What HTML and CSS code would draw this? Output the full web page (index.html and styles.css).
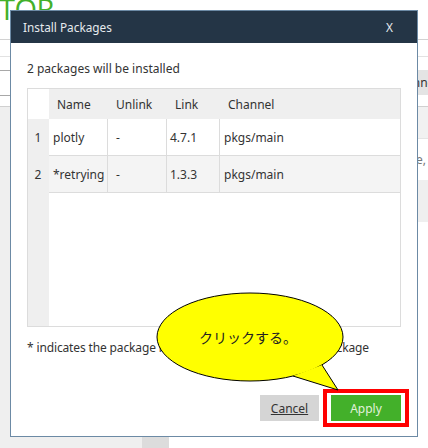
FILE: index.html
```html
<!DOCTYPE html>
<html lang="ja">
<head>
<meta charset="utf-8">
<title>Install Packages</title>
<link rel="stylesheet" href="styles.css">
</head>
<body>
<div class="page">
  <div class="topbar"><div class="logo"><span>NAVIGATOR</span></div></div>
  <div class="subbar"></div>
  <div class="toolbar">
    <div class="search"></div>
    <div class="chan">Channels</div>
  </div>
  <div class="main">
    <div class="sidebar"></div>
    <div class="scroll"></div>
    <div class="content">
      <div class="band1"></div>
      <div class="line">where,</div>
      <div class="band2"></div>
    </div>
  </div>
</div>

<div class="modal">
  <div class="modal-head">
    <span class="title">Install Packages</span>
    <span class="close">X</span>
  </div>
  <div class="modal-body">
    <div class="intro">2 packages will be installed</div>
    <table class="pkgs">
      <colgroup>
        <col class="c0"><col class="c1"><col class="c2"><col class="c3"><col class="c4">
      </colgroup>
      <thead>
        <tr>
          <th class="num"></th><th>Name</th><th>Unlink</th><th>Link</th><th>Channel</th>
        </tr>
      </thead>
      <tbody>
        <tr class="r1">
          <td class="num">1</td><td class="name">plotly</td><td class="unlink">-</td><td class="link">4.7.1</td><td class="chn">pkgs/main</td>
        </tr>
        <tr class="r2">
          <td class="num">2</td><td class="name">*retrying</td><td class="unlink">-</td><td class="link">1.3.3</td><td class="chn">pkgs/main</td>
        </tr>
        <tr class="filler">
          <td class="num"></td><td colspan="4"></td>
        </tr>
      </tbody>
    </table>
    <div class="note">* indicates the package is a dependency of a selected package</div>
    <div class="actions">
      <button class="btn cancel">Cancel</button>
      <button class="btn apply">Apply</button>
    </div>
  </div>
</div>

<div class="highlight"></div>

<div class="bubble">
  <svg width="200" height="110" viewBox="0 0 200 110">
    <ellipse cx="100" cy="49" rx="93" ry="44" fill="#ffff00" stroke="#000" stroke-width="1"/>
    <polyline points="172,77 188,102 143,88" fill="#ffff00" stroke="#000" stroke-width="1"/>
  </svg>
  <span class="bubble-text">クリックする。</span>
</div>
</body>
</html>
```

FILE: styles.css
```css
html, body {
  margin: 0;
  padding: 0;
}
body {
  width: 428px;
  height: 448px;
  overflow: hidden;
  position: relative;
  background: #fff;
  font-family: "Noto Sans", "Noto Sans CJK JP", sans-serif;
  color: #333;
}

/* background page */
.page {
  width: 428px;
  height: 448px;
  overflow: hidden;
  display: flex;
  flex-direction: column;
}
.topbar {
  height: 40px;
  flex: none;
  border-bottom: 1px solid #d2d2d2;
  box-sizing: border-box;
}
.logo {
  width: 54px;
  height: 39px;
  overflow: hidden;
  display: flex;
  justify-content: flex-end;
  align-items: flex-start;
}
.logo span {
  font-family: "Open Sans", sans-serif;
  font-weight: 400;
  font-size: 29px;
  line-height: 29px;
  color: #43b02a;
  white-space: nowrap;
  margin-top: -6px;
  letter-spacing: -0.5px;
}
.subbar {
  height: 17px;
  flex: none;
  border-bottom: 1px solid #e2e2e2;
  box-sizing: border-box;
}
.toolbar {
  height: 50px;
  flex: none;
  box-sizing: border-box;
  border-bottom: 1px solid #d0d0d0;
  padding-top: 13px;
  display: flex;
  align-items: flex-start;
}
.search {
  width: 150px;
  height: 26px;
  margin-left: -30px;
  box-sizing: border-box;
  border: 1px solid #a8a8a8;
}
.chan {
  margin-left: auto;
  margin-right: -40px;
  width: 85px;
  height: 25px;
  flex: none;
  background: #e4e4e4;
  font-size: 12px;
  line-height: 25px;
  padding-left: 8px;
  box-sizing: border-box;
  color: #333;
}
.main {
  flex: 1;
  display: flex;
}
.sidebar {
  width: 142px;
  background: #efefef;
}
.scroll {
  width: 27px;
  background: #dcdcdc;
}
.content {
  flex: 1;
  display: flex;
  flex-direction: column;
}
.band1 {
  height: 31px;
  background: #f1f1f1;
  border-bottom: 1px solid #e4e4e4;
}
.line {
  height: 41px;
  font-size: 12px;
  line-height: 41px;
  color: #777;
  text-align: right;
  white-space: nowrap;
  padding-right: 2px;
}
.band2 {
  height: 42px;
  background: #efefef;
}

/* modal */
.modal {
  position: absolute;
  left: 10px;
  top: 10px;
  width: 408px;
  height: 427px;
  box-sizing: border-box;
  border: 1px solid #6c8aa5;
  background: #fff;
  display: flex;
  flex-direction: column;
}
.modal-head {
  height: 32px;
  flex: none;
  background: #243546;
  color: #e6eaee;
  display: flex;
  align-items: center;
  justify-content: space-between;
  padding: 0 24px 0 12px;
  font-size: 11.8px;
}
.modal-body {
  flex: 1;
  display: flex;
  flex-direction: column;
  padding: 0 16px 15px 16px;
}
.intro {
  margin-top: 18px;
  font-size: 12px;
  line-height: 16px;
}
.pkgs {
  margin-top: 11px;
  width: 374px;
  height: 239px;
  table-layout: fixed;
  border-collapse: separate;
  border-spacing: 0;
  border: 1px solid #dcdcdc;
  font-size: 12px;
  box-sizing: border-box;
}
.c0 { width: 21px; }
.c1 { width: 59px; }
.c2 { width: 59px; }
.c3 { width: 53px; }
.pkgs th {
  height: 30px;
  background: #efefef;
  font-weight: normal;
  text-align: left;
  padding: 0 0 0 8px;
  color: #333;
}
.pkgs th.num {
  background: #fff;
}
.pkgs td {
  height: 36px;
  padding: 0 0 0 4px;
  border-right: 1px solid #dcdcdc;
  border-bottom: 1px solid #dcdcdc;
  white-space: nowrap;
  overflow: hidden;
}
.pkgs td.num {
  background: #efefef;
  border: none;
  padding: 0 1px 0 0;
  text-align: center;
}
.pkgs td.unlink { padding-left: 8px; }
.pkgs td.link { padding-left: 3px; }
.pkgs td.chn { border-right: none; }
.r1 td { background: #fff; }
.r2 td { background: #f4f4f4; }
.pkgs .filler td {
  height: auto;
  border: none;
  background: #fff;
}
.pkgs .filler td.num { background: #efefef; }
.note {
  margin-top: 13px;
  font-size: 12px;
  line-height: 16px;
  letter-spacing: -0.14px;
}
.actions {
  margin-top: auto;
  display: flex;
  justify-content: flex-end;
  gap: 12px;
}
.btn {
  height: 26px;
  border: none;
  font-family: "Noto Sans", sans-serif;
  font-size: 12px;
  padding: 0;
}
.cancel {
  width: 59px;
  background: #d5d5d5;
  color: #333;
  text-decoration: underline;
}
.apply {
  width: 70px;
  background: #43b02a;
  color: #e2f1dc;
}

/* overlays */
.highlight {
  position: absolute;
  left: 323px;
  top: 389px;
  width: 86px;
  height: 38px;
  box-sizing: border-box;
  border: 4px solid #ff0000;
}
.bubble {
  position: absolute;
  left: 150px;
  top: 288px;
  width: 200px;
  height: 110px;
}
.bubble svg {
  display: block;
}
.bubble-text {
  position: absolute;
  left: 49px;
  top: 39px;
  font-family: "Noto Sans CJK JP", sans-serif;
  font-size: 14px;
  line-height: 20px;
  color: #222;
  white-space: nowrap;
}
```
